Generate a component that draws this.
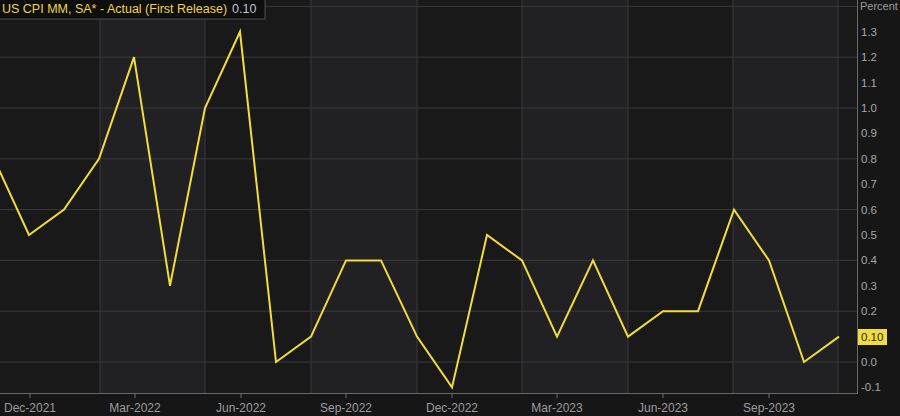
const yOf = (v: number) => 362 - v * 254;

const points: [number, number][] = [
  [-6, 0.8], [29, 0.5], [64, 0.6], [99, 0.8], [134, 1.2], [170, 0.3], [205, 1.0], [240, 1.3],
  [276, 0.0], [311, 0.1], [346, 0.4], [381, 0.4], [417, 0.1], [452, -0.1], [487, 0.5], [522, 0.4],
  [557, 0.1], [593, 0.4], [628, 0.1], [663, 0.2], [698, 0.2], [734, 0.6], [769, 0.4], [804, 0.0], [839, 0.1],
];

const vLines = [100, 205, 311, 417, 522, 628, 733, 838];
const bands = [[100, 205], [311, 417], [522, 628], [733, 838]];
const yTicks = [1.3, 1.2, 1.1, 1.0, 0.9, 0.8, 0.7, 0.6, 0.5, 0.4, 0.3, 0.2, 0.0, -0.1];
const xTicks: [number, string][] = [
  [30, "Dec-2021"], [135, "Mar-2022"], [241, "Jun-2022"], [346, "Sep-2022"],
  [452, "Dec-2022"], [557, "Mar-2023"], [663, "Jun-2023"], [769, "Sep-2023"],
];

export default function App() {
  return (
    <div className="h-[416px] w-[900px] overflow-hidden bg-[#161617]">
      <svg width="900" height="416" className="block" fontFamily="'Liberation Sans', Arial, sans-serif">
        <rect x="0" y="0" width="857" height="393" fill="#19191a" />
        {bands.map(([a, b]) => (
          <rect key={a} x={a} y="0" width={b - a} height="393" fill="#212123" />
        ))}
        {[1.4, 1.2, 1.0, 0.8, 0.6, 0.4, 0.2, 0.0].map((v) => (
          <line key={v} x1="0" x2="857" y1={yOf(v)} y2={yOf(v)} stroke="#3a3a3c" strokeWidth="1" />
        ))}
        {vLines.map((x) => (
          <line key={x} x1={x} x2={x} y1="0" y2="393" stroke="#3a3a3c" strokeWidth="1" />
        ))}
        <line x1="0" x2="857" y1="393.5" y2="393.5" stroke="#6a6a6c" />
        <line x1="857.5" x2="857.5" y1="0" y2="394" stroke="#6a6a6c" />
        {xTicks.map(([x]) => (
          <line key={x} x1={x} x2={x} y1="393" y2="398" stroke="#6a6a6c" />
        ))}
        <polyline
          points={points.map(([x, v]) => `${x},${yOf(v)}`).join(" ")}
          fill="none"
          stroke="#f2dc3c"
          strokeWidth="2"
        />
        {xTicks.map(([x, l]) => (
          <text key={l} x={x} y="412" textAnchor="middle" fontSize="12" fill="#9c9c9e">{l}</text>
        ))}
        <text x="860" y="10" fontSize="11" fill="#9c9c9e">Percent</text>
        {yTicks.map((v) => (
          <text key={v} x="861" y={yOf(v) + 4} fontSize="11.5" fill="#a6a6a8">{v.toFixed(1)}</text>
        ))}
        <rect x="858" y="329" width="29" height="16" fill="#f2dc3c" />
        <text x="861" y="341" fontSize="11.5" fill="#2a2a2a">0.10</text>
        <rect x="-1" y="-1" width="266" height="20" fill="#0e0e0f" stroke="#505052" />
        <text x="2" y="13" fontSize="12.5" fill="#efd44a">
          US CPI MM, SA* - Actual (First Release)
          <tspan dx="5" fill="#b9c4d6">0.10</tspan>
        </text>
      </svg>
    </div>
  );
}
